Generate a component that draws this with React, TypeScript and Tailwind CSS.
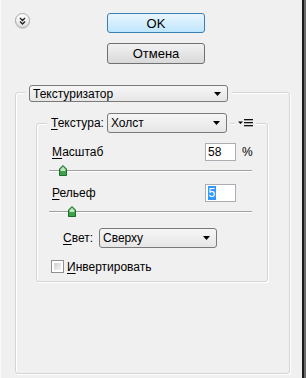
import React from 'react'

const Arrow = () => (
  <svg width="7" height="4" viewBox="0 0 7 4" className="shrink-0">
    <path d="M0 0 H7 L3.5 4 Z" fill="#000" />
  </svg>
)

const Select = ({ label, className }: { label: string; className: string }) => (
  <div
    className={`flex items-center justify-between pl-[3px] pr-[6px] border border-[#7a7a7a] rounded-[3px] bg-gradient-to-b from-[#f6f6f6] to-[#e6e6e6] ${className}`}
  >
    <span>{label}</span>
    <Arrow />
  </div>
)

const Thumb = ({ left }: { left: number }) => (
  <svg
    width="8"
    height="11"
    viewBox="0 0 8 11"
    className="absolute top-0"
    style={{ left }}
  >
    <path d="M4 0.5 L7.5 4 V10.5 H0.5 V4 Z" fill="#3fa34d" stroke="#1f6b2a" strokeWidth="1" />
    <path d="M4 1.8 L6.3 4.2 V6 H1.7 V4.2 Z" fill="#bfe8c4" />
  </svg>
)

const Slider = ({ thumb }: { thumb: number }) => (
  <div className="relative ml-[12px] w-[203px] h-[12px]">
    <div className="absolute left-0 right-0 top-[5px] h-[1px] bg-[#a0a0a0] rounded-l-full" />
    <div className="absolute left-0 right-0 top-[6px] h-[1px] bg-white" />
    <Thumb left={thumb} />
  </div>
)

const U = ({ c }: { c: string }) => <span className="underline underline-offset-2">{c}</span>

export default function App() {
  return (
    <div className="flex w-[306px] h-[378px] bg-[#f0f0f0] font-['Liberation_Sans',Arial,sans-serif] text-[12px] text-black leading-none overflow-hidden">
      <div className="w-[302px] h-full border-l border-[#fafafa] pt-[13px]">
        <div className="flex items-start pl-[14px]">
          <div className="w-[15px] h-[15px] rounded-full border border-[#a8a8a8] bg-gradient-to-b from-white to-[#e2e2e2] flex items-center justify-center shadow-[0_1px_1px_rgba(0,0,0,0.15)]">
            <svg width="7" height="8" viewBox="0 0 7 8">
              <path d="M1 1 L3.5 3.5 L6 1 M1 4.5 L3.5 7 L6 4.5" fill="none" stroke="#222" strokeWidth="1.4" />
            </svg>
          </div>
          <div className="ml-[77px] flex flex-col gap-[10px]">
            <div className="w-[98px] h-[20px] rounded-[3px] border border-[#3c7fb1] bg-gradient-to-b from-[#eaf6fd] to-[#bee6fd] flex items-center justify-center text-[13px]">
              OK
            </div>
            <div className="w-[98px] h-[21px] rounded-[3px] border border-[#707070] bg-gradient-to-b from-[#f2f2f2] to-[#d9d9d9] flex items-center justify-center text-[13px]">
              Отмена
            </div>
          </div>
        </div>

        <div className="mt-[28px] ml-[14px] w-[275px] h-[282px] border border-[#d5d5d5] rounded-[3px] shadow-[inset_1px_1px_0_#fff,1px_1px_0_#fff]">
          <div className="-mt-[8px] ml-[9px] w-[207px] px-[4px] bg-[#f0f0f0]">
            <Select label="Текстуризатор" className="w-[199px] h-[17px]" />
          </div>

          <div className="mt-[21px] ml-[20px] w-[232px] h-[159px] border border-[#d5d5d5] rounded-[3px] shadow-[inset_1px_1px_0_#fff,1px_1px_0_#fff]">
            <div className="-mt-[11px] ml-[10px] flex items-center">
              <div className="flex items-center pl-[4px] pr-[3px] bg-[#f0f0f0]">
                <span className="w-[56px]">
                  <U c="Т" />екстура:
                </span>
                <Select label="Холст" className="w-[120px] h-[20px]" />
              </div>
              <div className="ml-[5px] w-[21px] h-[20px] flex items-center justify-center bg-[#f0f0f0]">
                <svg width="15" height="8" viewBox="0 0 15 8">
                  <path d="M0 2.5 H5 L2.5 5 Z" fill="#000" />
                  <rect x="6" y="0" width="9" height="1.3" fill="#111" />
                  <rect x="6" y="3" width="9" height="1.3" fill="#111" />
                  <rect x="6" y="6" width="9" height="1.3" fill="#111" />
                </svg>
              </div>
            </div>

            <div className="mt-[10px] pl-[15px] flex items-center">
              <span className="w-[153px]">
                <U c="М" />асштаб
              </span>
              <div className="w-[31px] h-[18px] border border-[#abadb3] bg-white flex items-center pl-[2px]">58</div>
              <span className="ml-[6px]">%</span>
            </div>
            <div className="mt-[4px]">
              <Slider thumb={10} />
            </div>

            <div className="mt-[7px] pl-[15px] flex items-center">
              <span className="w-[153px]">
                <U c="Р" />ельеф
              </span>
              <div className="w-[31px] h-[18px] border border-[#abadb3] bg-white flex items-center pl-[2px]">
                <span className="bg-[#3399ff] text-white px-[0.5px] py-[1px]">5</span>
              </div>
            </div>
            <div className="mt-[4px]">
              <Slider thumb={19} />
            </div>

            <div className="mt-[10px] pl-[26px] flex items-center">
              <span className="w-[36px]">
                <U c="С" />вет:
              </span>
              <Select label="Сверху" className="w-[118px] h-[20px]" />
            </div>

            <div className="mt-[12px] pl-[14px] flex items-center">
              <div className="w-[13px] h-[13px] border border-[#8e8f8f] bg-white p-[2px]">
                <div className="w-full h-full bg-gradient-to-br from-[#d0d0d0] to-[#f4f4f4]" />
              </div>
              <span className="ml-[3px]">
                <U c="И" />нвертировать
              </span>
            </div>
          </div>
        </div>
      </div>
      <div className="w-[2px] h-full bg-[#1c1c1c]" />
      <div className="w-[2px] h-full bg-[#6b6b6b]" />
    </div>
  )
}
